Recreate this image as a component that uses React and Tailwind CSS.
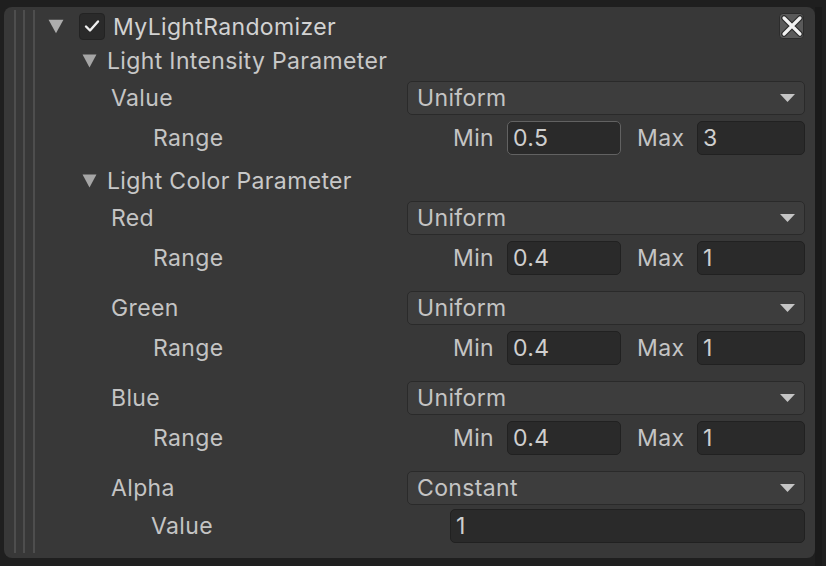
const font = { fontFamily: "Inter, 'Noto Sans', sans-serif" };

function Fold({ big }) {
  return (
    <svg width={big ? 16 : 15} height={big ? 15 : 14} viewBox="0 0 14 13" className="shrink-0">
      <path d="M0.5 0.5 L13.5 0.5 L7 12.5 Z" fill={big ? "#adadad" : "#a6a6a6"} />
    </svg>
  );
}

function Select({ value }) {
  return (
    <div className="flex-1 flex items-center justify-between rounded-[5px] border border-[#2a2a2a] bg-[#3d3d3d] pl-[9px] pr-[9px]">
      <span className="text-[23px] tracking-[0.35px] text-[#c4c4c4] leading-none">{value}</span>
      <svg width="15" height="8" viewBox="0 0 15 8">
        <path d="M0 0 L15 0 L7.5 8 Z" fill="#c4c4c4" />
      </svg>
    </div>
  );
}

function Input({ value, focus, className }) {
  return (
    <div
      className={`h-[34px] flex items-center rounded-[5px] border bg-[#2a2a2a] pl-[5px] ${
        focus ? "border-[#626262]" : "border-[#212121]"
      } ${className}`}
    >
      <span className="text-[23px] tracking-[0.35px] text-[#cfcfcf] leading-none">{value}</span>
    </div>
  );
}

const label = "text-[23px] tracking-[0.35px] text-[#c4c4c4]";

function Param({ name, mode, min, max, focus, first }) {
  return (
    <div className={first ? "mt-[7px]" : "mt-[16px]"}>
      <div className="flex h-[34px]">
        <div className={`w-[368px] flex items-center pl-[72px] ${label}`}>{name}</div>
        <Select value={mode} />
      </div>
      <div className="flex h-[34px] mt-[6px] items-center">
        <div className={`w-[414px] pl-[114px] ${label}`}>Range</div>
        <span className={`w-[54px] ${label}`}>Min</span>
        <Input value={min} focus={focus} className="w-[114px]" />
        <span className={`w-[76px] pl-[16px] ${label}`}>Max</span>
        <Input value={max} className="flex-1" />
      </div>
    </div>
  );
}

export default function App() {
  return (
    <div className="w-[826px] h-[566px] bg-[#1f1f1f] pt-[7px] pl-[4px] overflow-hidden" style={font}>
      <div className="flex">
        <div className="w-[811px] h-[551px] bg-[#383838] rounded-[8px] flex">
          <div className="flex pl-[10px] pt-[3px] pb-[5px] gap-[7px]">
            <div className="w-[2px] bg-[#4e4e4e]" />
            <div className="w-[2px] bg-[#4e4e4e]" />
            <div className="w-[2px] bg-[#4e4e4e] ml-[1px]" />
          </div>
          <div className="flex-1 pt-[5px] pr-[10px] pl-[4px]">
            {/* header */}
            <div className="flex h-[28px] items-center">
              <div className="pl-[9px] w-[40px] flex">
                <Fold big />
              </div>
              <div className="w-[26px] h-[27px] rounded-[4px] bg-[#2a2a2a] border border-[#232323] flex items-center justify-center">
                <svg width="16" height="14" viewBox="0 0 16 14">
                  <path d="M2 7.5 L6 11.5 L14 2.5" fill="none" stroke="#f0f0f0" strokeWidth="2.4" strokeLinecap="round" strokeLinejoin="round" />
                </svg>
              </div>
              <span className="ml-[8px] text-[23px] tracking-[0.35px] text-[#d2d2d2] leading-none pt-[2px]">MyLightRandomizer</span>
              <div className="ml-auto mr-[1px] w-[25px] h-[26px] rounded-[4px] bg-[#5a5a5a] border border-[#2c2c2c] flex items-center justify-center">
                <svg width="22" height="22" viewBox="0 0 22 22">
                  <path d="M3 3 L19 19 M19 3 L3 19" stroke="#2a2a2a" strokeWidth="5.5" strokeLinecap="round" />
                  <path d="M3 3 L19 19 M19 3 L3 19" stroke="#f2f2f2" strokeWidth="3.2" strokeLinecap="round" />
                </svg>
              </div>
            </div>

            {/* light intensity */}
            <div className="flex h-[26px] items-center mt-[8px] pl-[43px]">
              <Fold />
              <span className="ml-[10px] text-[23px] tracking-[0.35px] text-[#c8c8c8]">Light Intensity Parameter</span>
            </div>
            <Param name="Value" mode="Uniform" min="0.5" max="3" focus first />

            {/* light color */}
            <div className="flex h-[26px] items-center mt-[13px] pl-[43px]">
              <Fold />
              <span className="ml-[10px] text-[23px] tracking-[0.35px] text-[#c8c8c8]">Light Color Parameter</span>
            </div>
            <Param name="Red" mode="Uniform" min="0.4" max="1" first />
            <Param name="Green" mode="Uniform" min="0.4" max="1" />
            <Param name="Blue" mode="Uniform" min="0.4" max="1" />

            <div className="mt-[16px]">
              <div className="flex h-[34px]">
                <div className={`w-[368px] flex items-center pl-[72px] ${label}`}>Alpha</div>
                <Select value="Constant" />
              </div>
              <div className="flex h-[34px] mt-[4px] items-center">
                <div className={`w-[411px] pl-[112px] ${label}`}>Value</div>
                <Input value="1" className="flex-1" />
              </div>
            </div>
          </div>
        </div>
        <div className="w-[7px] h-[566px] bg-[#1a1a1a]" />
      </div>
    </div>
  );
}
